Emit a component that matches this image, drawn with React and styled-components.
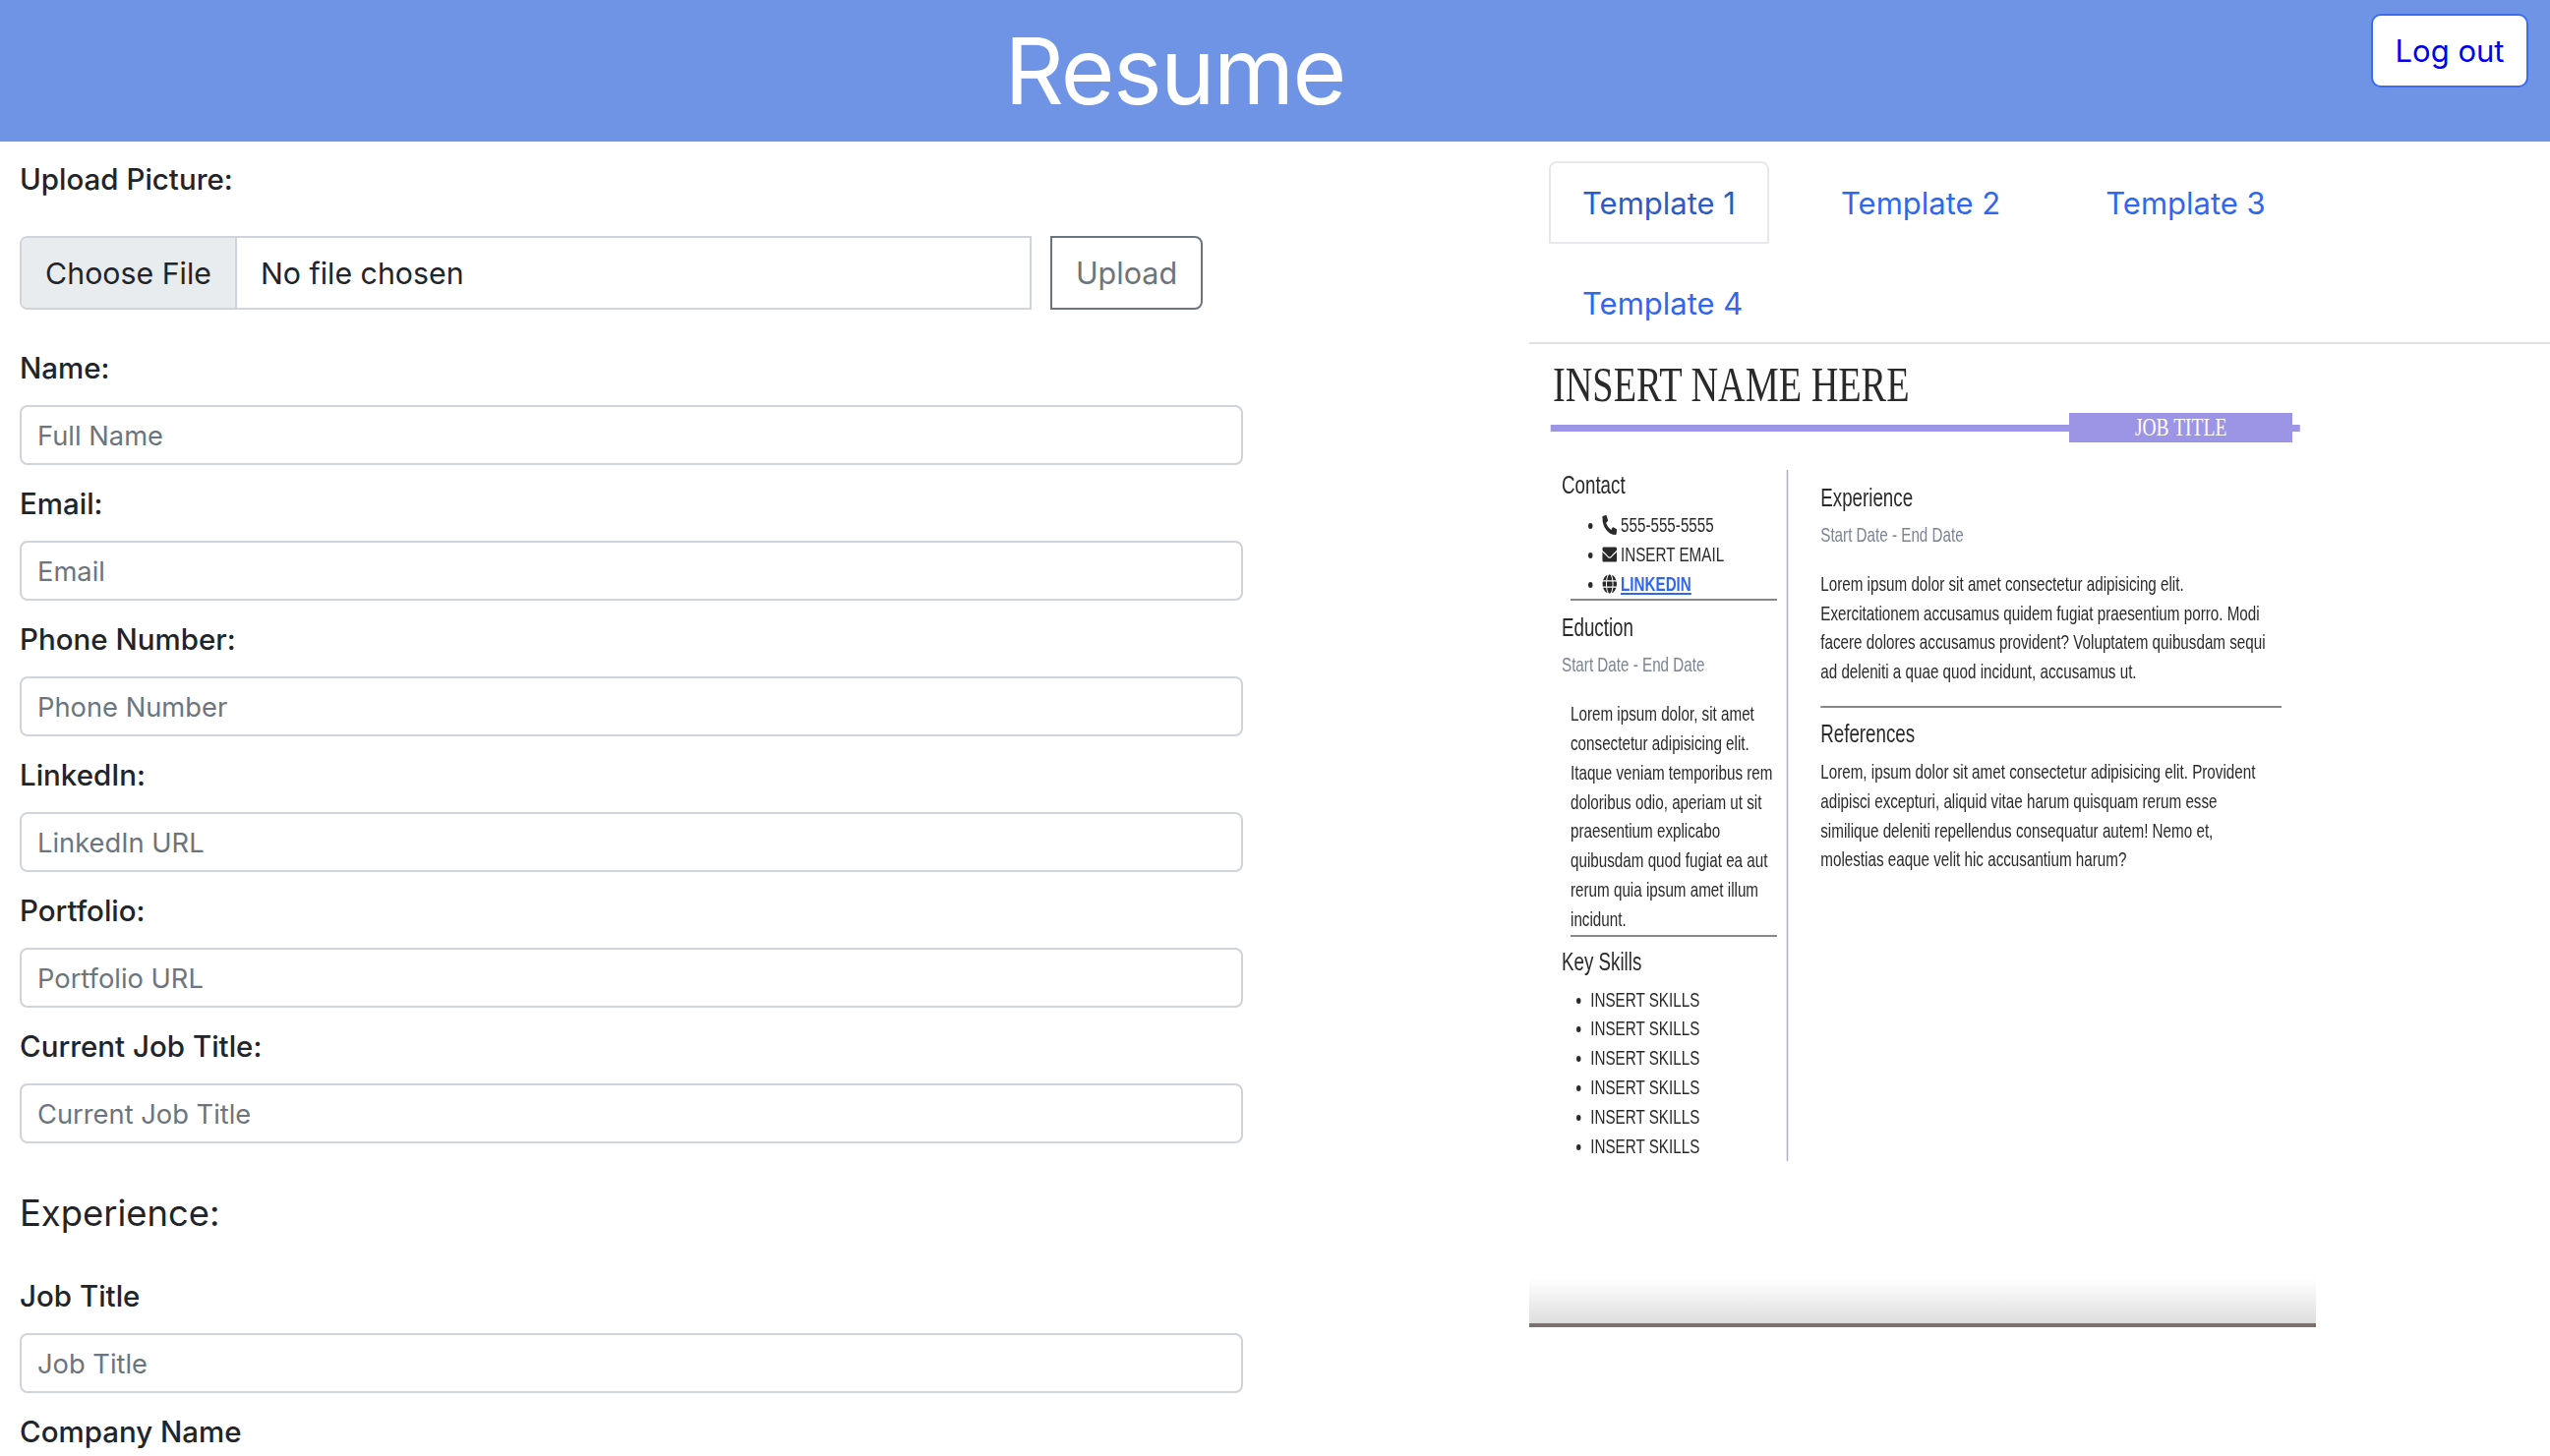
import React from 'react'
import styled, { createGlobalStyle } from 'styled-components'
import { FaPhoneAlt, FaEnvelope, FaGlobe } from 'react-icons/fa'

const GlobalStyle = createGlobalStyle`
  html, body {
    margin: 0;
    padding: 0;
    background: #fff;
    overflow: hidden;
  }
  * { box-sizing: border-box; }
`

const Page = styled.div`
  height: 1481px;
  overflow: hidden;
  font-family: Inter, "Liberation Sans", sans-serif;
  color: #212529;
`

const Header = styled.header`
  height: 144px;
  background: #6f94e6;
  display: flex;
  align-items: flex-start;
  padding: 14px 22px 0 0;
`

const Title = styled.h1`
  flex: 1;
  margin: -14px 0 0;
  height: 144px;
  line-height: 144px;
  text-align: center;
  color: #fff;
  font-size: 94px;
  font-weight: 400;
  letter-spacing: -1.7px;
  padding-right: 22px;
`

const LogoutButton = styled.button`
  width: 160px;
  height: 75px;
  background: #fff;
  color: #0000ee;
  border: 2px solid #3b6cf0;
  border-radius: 10px;
  font: 400 31px Inter, sans-serif;
`

const Main = styled.main`
  display: grid;
  grid-template-columns: 1555px 1fr;
`

const FormColumn = styled.section`
  padding: 20px 20px 0;
`

const Label = styled.label`
  display: block;
  height: 38px;
  line-height: 36px;
  font-size: 29.5px;
  font-weight: 500;
  margin-bottom: ${p => p.$gap || 18}px;
`

const FileRow = styled.div`
  display: flex;
  gap: 19px;
  height: 75px;
  margin-bottom: 41px;
`

const FileBox = styled.div`
  width: 1029px;
  display: flex;
  align-items: center;
  border: 2px solid #ced4da;
  border-radius: 8px 0 0 8px;
  font-size: 30.3px;
`

const ChooseButton = styled.span`
  width: 219px;
  height: 100%;
  display: flex;
  align-items: center;
  justify-content: center;
  background: #e9ecef;
  border-right: 2px solid #ced4da;
  border-radius: 6px 0 0 6px;
`

const FileName = styled.span`
  padding-left: 24px;
`

const UploadButton = styled.button`
  width: 155px;
  background: #fff;
  color: #6c757d;
  border: 2px solid #6c757d;
  border-radius: 0 8px 8px 0;
  font: 400 30.5px Inter, sans-serif;
`

const TextInput = styled.input`
  display: block;
  width: 1244px;
  height: 61px;
  padding: 2px 16px 0;
  margin-bottom: 21px;
  border: 2px solid #ced4da;
  border-radius: 8px;
  font: 400 27.3px Inter, sans-serif;
  &::placeholder { color: #6c757d; opacity: 1; }
`

const SectionTitle = styled.h3`
  margin: 44px 0 39px;
  height: 54px;
  line-height: 54px;
  font-size: 36.4px;
  font-weight: 400;
`

const PreviewColumn = styled.section`
  padding-top: 20px;
  min-width: 0;
`

const TabList = styled.nav`
  display: flex;
  flex-wrap: wrap;
  column-gap: 39px;
  padding-left: 20px;
  border-bottom: 2px solid #dee2e6;
`

const Tab = styled.a`
  height: 84px;
  margin-bottom: ${p => (p.$last ? -2 : 18)}px;
  padding: 0 32px;
  display: flex;
  align-items: center;
  font-size: 31px;
  color: ${p => (p.$active ? '#2b5bc4' : '#2f68ef')};
  border: 2px solid ${p => (p.$active ? '#e6e8ec' : 'transparent')};
  border-radius: 8px 8px 0 0;
`

const TabBreak = styled.div`
  flex-basis: 100%;
`

/* the preview is a screenshot squeezed sideways, so the whole sheet is scaled */
const PreviewFrame = styled.div`
  width: 800px;
  height: 1000px;
  overflow: hidden;
  border-bottom: 4px solid #7a716e;
  background: linear-gradient(to bottom, #fff 0, #fff 950px, #dedede 996px);
`

const Sheet = styled.div`
  width: 1067px;
  transform: scaleX(0.75);
  transform-origin: left top;
  padding: 0 0 0 32px;
  color: #2a2a2a;
  font-family: "Liberation Sans", Arial, sans-serif;
  font-size: 20.3px;
  line-height: 29.8px;
`

const SheetName = styled.div`
  font-family: "Liberation Serif", serif;
  font-size: 51px;
  line-height: 60px;
  height: 60px;
  margin-top: 11px;
`

const TitleBar = styled.div`
  width: 1016px;
  height: 7px;
  margin: 11px 0 0 -3px;
  background: #9c94e4;
  position: relative;
`

const JobBadge = styled.div`
  position: absolute;
  left: 703px;
  right: 10px;
  top: -12px;
  height: 30px;
  line-height: 30px;
  background: #9c94e4;
  color: #fff;
  text-align: center;
  font-family: "Liberation Serif", serif;
  font-size: 26px;
`

const Columns = styled.div`
  display: flex;
  margin-top: 39px;
  margin-left: -32px;
`

const SideColumn = styled.div`
  width: 351px;
  height: 703px;
  padding: 0 0 0 44px;
  border-right: 2px solid #a8a8e8;
`

const MainColumn = styled.div`
  width: 670px;
  padding: 13px 0 0 44px;
`

const SheetHeading = styled.div`
  font-size: 25px;
  line-height: 30px;
  margin: ${p => p.$margin || '0'};
`

const DateLine = styled.div`
  color: #7b8494;
  margin: 9px 0 20px;
`

const BlockText = styled.p`
  margin: 0;
  padding-left: ${p => p.$indent || 0}px;
  max-width: ${p => p.$max || 'none'};
`

const SheetRule = styled.hr`
  margin: ${p => p.$margin};
  border: 0;
  border-top: 2px solid #888;
  width: ${p => p.$width}px;
`

const BulletList = styled.ul`
  margin: 0;
  padding-left: ${p => p.$indent}px;
  line-height: 29.8px;
  li { height: 29.8px; }
`

const ContactIcon = styled.span`
  display: inline-block;
  height: 20px;
  margin-right: 5px;
  font-size: 20px;
  line-height: 20px;
  vertical-align: -3px;
`

const SheetLink = styled.a`
  color: #2f68ef;
  font-weight: 700;
  text-decoration: underline;
`

const fields = [
  ['Name:', 'Full Name'],
  ['Email:', 'Email'],
  ['Phone Number:', 'Phone Number'],
  ['LinkedIn:', 'LinkedIn URL'],
  ['Portfolio:', 'Portfolio URL'],
  ['Current Job Title:', 'Current Job Title'],
]

const skills = Array.from({ length: 6 }, () => 'INSERT SKILLS')

const App = () => (
  <Page>
    <GlobalStyle />
    <Header>
      <Title>Resume</Title>
      <LogoutButton>Log out</LogoutButton>
    </Header>
    <Main>
      <FormColumn>
        <Label $gap={38}>Upload Picture:</Label>
        <FileRow>
          <FileBox>
            <ChooseButton>Choose File</ChooseButton>
            <FileName>No file chosen</FileName>
          </FileBox>
          <UploadButton>Upload</UploadButton>
        </FileRow>
        {fields.map(([label, placeholder]) => (
          <div key={label}>
            <Label>{label}</Label>
            <TextInput placeholder={placeholder} />
          </div>
        ))}
        <SectionTitle>Experience:</SectionTitle>
        <Label>Job Title</Label>
        <TextInput placeholder="Job Title" />
        <Label>Company Name</Label>
        <TextInput placeholder="Company Name" />
      </FormColumn>
      <PreviewColumn>
        <TabList>
          <Tab $active>Template 1</Tab>
          <Tab>Template 2</Tab>
          <Tab>Template 3</Tab>
          <TabBreak />
          <Tab $last>Template 4</Tab>
        </TabList>
        <PreviewFrame>
          <Sheet>
            <SheetName>INSERT NAME HERE</SheetName>
            <TitleBar>
              <JobBadge>JOB TITLE</JobBadge>
            </TitleBar>
            <Columns>
              <SideColumn>
                <SheetHeading $margin="0 0 12px">Contact</SheetHeading>
                <BulletList $indent={55}>
                  <li><ContactIcon><FaPhoneAlt /></ContactIcon>555-555-5555</li>
                  <li><ContactIcon><FaEnvelope /></ContactIcon>INSERT EMAIL</li>
                  <li><ContactIcon><FaGlobe /></ContactIcon><SheetLink>LINKEDIN</SheetLink></li>
                </BulletList>
                <SheetRule $width={280} $margin="0 0 12px 12px" />
                <SheetHeading>Eduction</SheetHeading>
                <DateLine>Start Date - End Date</DateLine>
                <BlockText $indent={12}>
                  Lorem ipsum dolor, sit amet consectetur adipisicing elit. Itaque veniam temporibus rem doloribus odio, aperiam ut sit praesentium explicabo quibusdam quod fugiat ea aut rerum quia ipsum amet illum incidunt.
                </BlockText>
                <SheetRule $width={280} $margin="0 0 10px 12px" />
                <SheetHeading $margin="0 0 10px">Key Skills</SheetHeading>
                <BulletList $indent={39}>
                  {skills.map((skill, i) => <li key={i}>{skill}</li>)}
                </BulletList>
              </SideColumn>
              <MainColumn>
                <SheetHeading>Experience</SheetHeading>
                <DateLine>Start Date - End Date</DateLine>
                <BlockText $max="612px">
                  Lorem ipsum dolor sit amet consectetur adipisicing elit. Exercitationem accusamus quidem fugiat praesentium porro. Modi facere dolores accusamus provident? Voluptatem quibusdam sequi ad deleniti a quae quod incidunt, accusamus ut.
                </BlockText>
                <SheetRule $width={625} $margin="19px 0 11px 0" />
                <SheetHeading $margin="0 0 10px">References</SheetHeading>
                <BlockText $max="612px">
                  Lorem, ipsum dolor sit amet consectetur adipisicing elit. Provident adipisci excepturi, aliquid vitae harum quisquam rerum esse similique deleniti repellendus consequatur autem! Nemo et, molestias eaque velit hic accusantium harum?
                </BlockText>
              </MainColumn>
            </Columns>
          </Sheet>
        </PreviewFrame>
      </PreviewColumn>
    </Main>
  </Page>
)

export default App
